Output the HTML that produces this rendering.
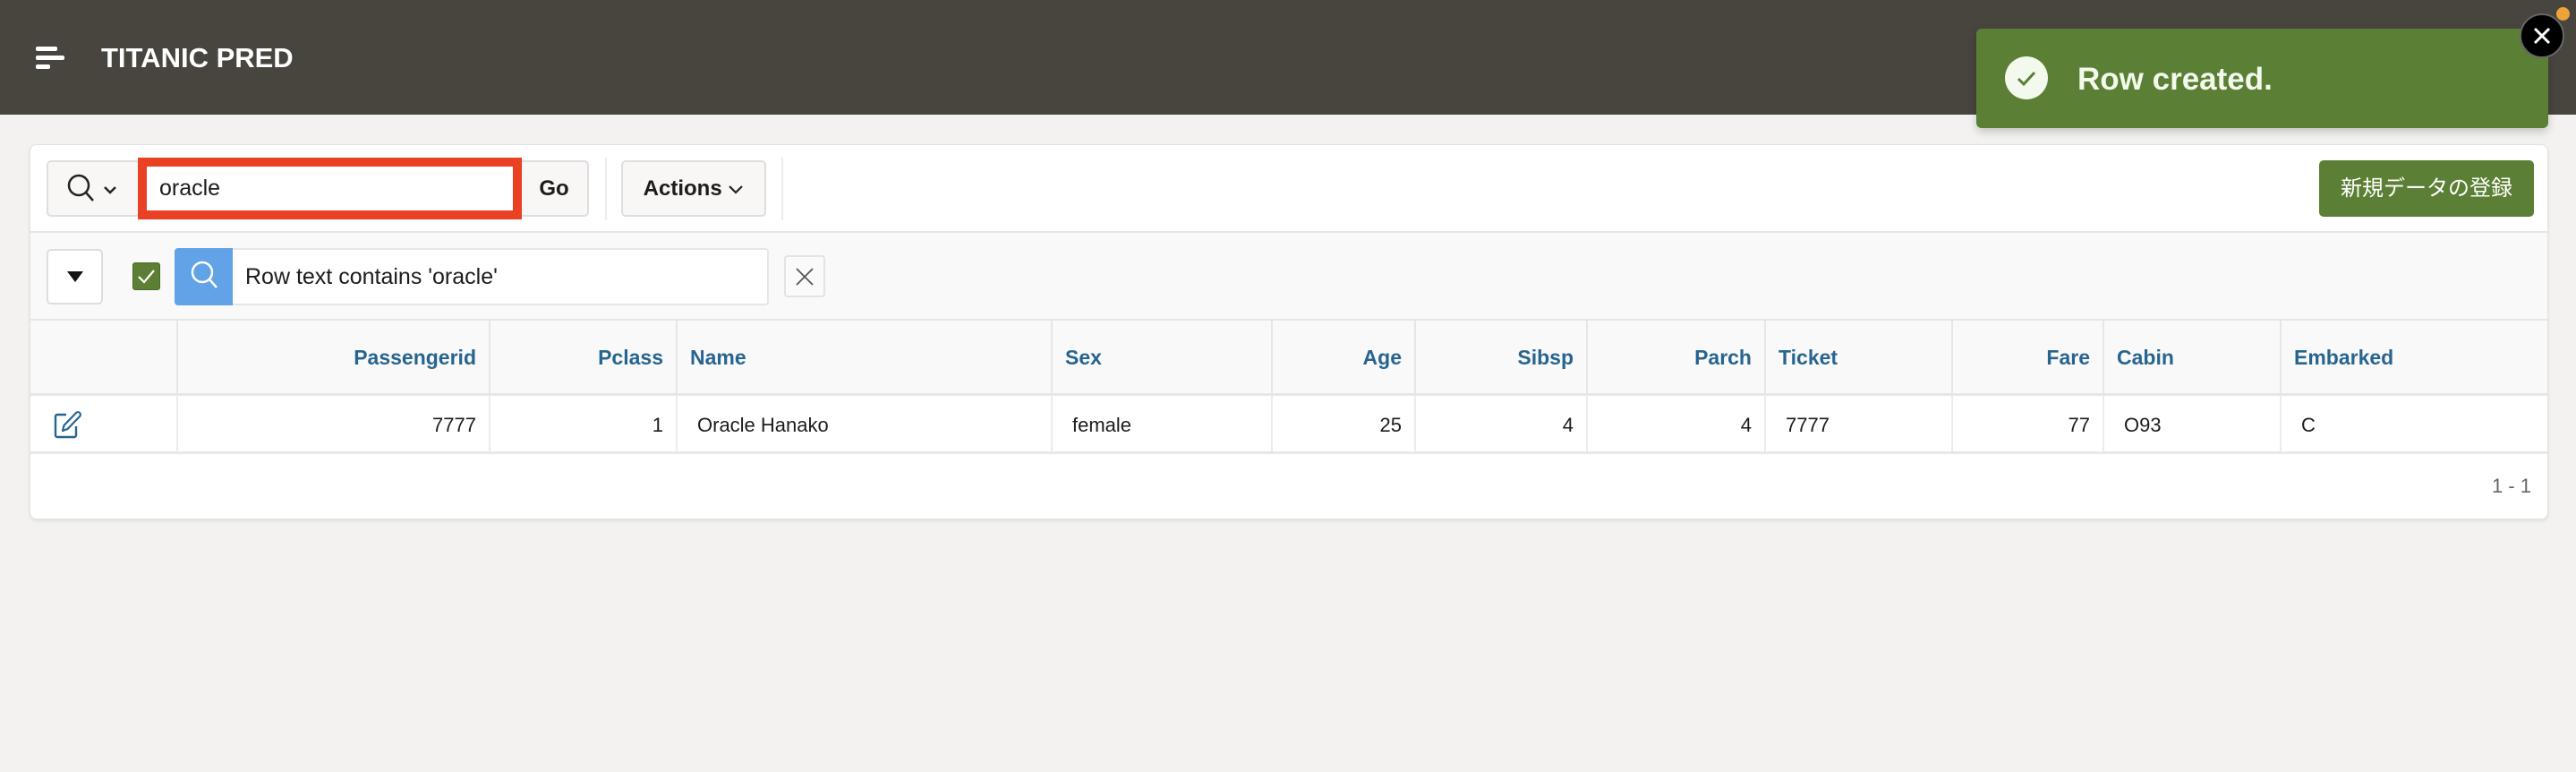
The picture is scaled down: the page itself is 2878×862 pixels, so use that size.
<!DOCTYPE html>
<html><head><meta charset="utf-8"><style>
*{box-sizing:border-box;margin:0;padding:0}
body{width:2878px;height:862px;background:#f3f2f0;font-family:"Liberation Sans","Noto Sans CJK JP",sans-serif;position:relative;overflow:hidden;color:#1c1c1c}
.a{position:absolute}
.hdr{left:0;top:0;width:2878px;height:128px;background:#48453f}
.card{left:33px;top:161px;width:2814px;height:419px;background:#fff;border:1px solid #e2e2e2;border-radius:8px;box-shadow:0 2px 4px rgba(0,0,0,.08);overflow:hidden}
.btn{background:#f8f7f5;border:2px solid #dedede;border-radius:5px}
.th{top:196px;height:82px;line-height:82px;font-weight:bold;font-size:23px;color:#276590;padding:0 14px;border-left:2px solid #e6e6e6}
.td{top:280px;height:65px;line-height:65px;font-size:22px;padding:0 14px;border-left:2px solid #ececec}
.r{text-align:right}
</style></head><body>
<div class="a hdr"></div>
<div class="a" style="left:40px;top:52px;width:24px;height:5px;background:#fff;border-radius:2px"></div>
<div class="a" style="left:40px;top:62px;width:32px;height:5px;background:#fff;border-radius:2px"></div>
<div class="a" style="left:40px;top:72px;width:16px;height:5px;background:#fff;border-radius:2px"></div>
<div class="a" style="left:113px;top:45px;font-size:31px;font-weight:bold;color:#fff;line-height:40px">TITANIC PRED</div>

<div class="a card">
 <div class="a btn" style="left:18px;top:17px;width:105px;height:63px"></div>
 <svg class="a" style="left:38px;top:30px" width="70" height="40" viewBox="0 0 70 40"><circle cx="16" cy="15" r="11" fill="none" stroke="#222" stroke-width="2.5"/><line x1="24" y1="23" x2="32" y2="32" stroke="#222" stroke-width="2.5"/><polyline points="45,17 51,23 57,17" fill="none" stroke="#222" stroke-width="2.5"/></svg>
 <div class="a btn" style="left:520px;top:17px;width:104px;height:63px;line-height:59px;text-align:center;font-weight:bold;font-size:24px;padding-left:26px">Go</div>
 <div class="a" style="left:120px;top:14px;width:429px;height:69px;border:10px solid #ea4125;background:#fff;font-size:25px;line-height:49px;padding-left:14px">oracle</div>
 <div class="a" style="left:642px;top:14px;width:2px;height:70px;background:#ececec"></div>
 <div class="a btn" style="left:660px;top:17px;width:162px;height:63px;line-height:59px;text-align:center;font-weight:bold;font-size:24px">Actions <svg width="18" height="12" viewBox="0 0 18 12"><polyline points="2,2 9,9 16,2" fill="none" stroke="#222" stroke-width="2.2"/></svg></div>
 <div class="a" style="left:839px;top:14px;width:2px;height:70px;background:#ececec"></div>
 <div class="a" style="left:2557px;top:17px;width:240px;height:63px;background:#5b7f34;border-radius:5px;color:#fff;font-size:24px;line-height:63px;text-align:center">新規データの登録</div>
 <div class="a" style="left:0;top:96px;width:2814px;height:100px;background:#f9f9f9;border-top:2px solid #e6e6e6"></div>
 <div class="a" style="left:18px;top:116px;width:63px;height:62px;background:#fff;border:2px solid #dedede;border-radius:5px"></div>
 <div class="a" style="left:41px;top:141px;width:0;height:0;border-left:9px solid transparent;border-right:9px solid transparent;border-top:12px solid #111"></div>
 <div class="a" style="left:114px;top:131px;width:31px;height:31px;background:#5b7f34;border:1px solid #4a6a28;border-radius:3px"></div>
 <svg class="a" style="left:117px;top:135px" width="25" height="22"><polyline points="4,12 10,18 21,5" fill="none" stroke="#fff" stroke-width="2.2"/></svg>
 <div class="a" style="left:161px;top:115px;width:664px;height:64px;background:#fff;border:2px solid #e6e6e6;border-radius:4px"></div>
 <div class="a" style="left:161px;top:115px;width:65px;height:64px;background:#61a3e6;border-radius:4px 0 0 4px"></div>
 <svg class="a" style="left:170px;top:120px" width="48" height="52"><circle cx="22" cy="22" r="11" fill="none" stroke="#fff" stroke-width="2.5"/><line x1="30" y1="30" x2="38" y2="39" stroke="#fff" stroke-width="2.5"/></svg>
 <div class="a" style="left:240px;top:115px;line-height:64px;font-size:25px">Row text contains 'oracle'</div>
 <div class="a" style="left:842px;top:123px;width:46px;height:47px;background:#fafafa;border:2px solid #e3e3e3;border-radius:4px"></div>
 <svg class="a" style="left:853px;top:135px" width="24" height="24"><path d="M3 3L21 21M21 3L3 21" stroke="#555" stroke-width="1.8"/></svg>
 <div class="a" style="left:0;top:194px;width:2814px;height:86px;background:#f9f9f9;border-top:2px solid #e6e6e6;border-bottom:3px solid #e6e6e6"></div>
 <div class="a th r" style="left:163px;width:349px">Passengerid</div>
 <div class="a th r" style="left:512px;width:209px">Pclass</div>
 <div class="a th" style="left:721px;width:419px">Name</div>
 <div class="a th" style="left:1140px;width:246px">Sex</div>
 <div class="a th r" style="left:1386px;width:160px">Age</div>
 <div class="a th r" style="left:1546px;width:192px">Sibsp</div>
 <div class="a th r" style="left:1738px;width:199px">Parch</div>
 <div class="a th" style="left:1937px;width:209px">Ticket</div>
 <div class="a th r" style="left:2146px;width:169px">Fare</div>
 <div class="a th" style="left:2315px;width:198px">Cabin</div>
 <div class="a th" style="left:2513px;width:301px">Embarked</div>
 <svg class="a" style="left:26px;top:295px" width="32" height="34" viewBox="0 0 32 34"><path d="M14 6H4a2 2 0 0 0-2 2v21a2 2 0 0 0 2 2h19a2 2 0 0 0 2-2V19" fill="none" stroke="#276590" stroke-width="2.4"/><path d="M10 24l1.5-6L25 4a2.5 2.5 0 0 1 4 4L15.5 22z" fill="none" stroke="#276590" stroke-width="2.2" stroke-linejoin="round"/></svg>
 <div class="a td r" style="left:163px;width:349px">7777</div>
 <div class="a td r" style="left:512px;width:209px">1</div>
 <div class="a td" style="left:721px;width:419px;padding-left:22px">Oracle Hanako</div>
 <div class="a td" style="left:1140px;width:246px;padding-left:22px">female</div>
 <div class="a td r" style="left:1386px;width:160px">25</div>
 <div class="a td r" style="left:1546px;width:192px">4</div>
 <div class="a td r" style="left:1738px;width:199px">4</div>
 <div class="a td" style="left:1937px;width:209px;padding-left:22px">7777</div>
 <div class="a td r" style="left:2146px;width:169px">77</div>
 <div class="a td" style="left:2315px;width:198px;padding-left:22px">O93</div>
 <div class="a td" style="left:2513px;width:301px;padding-left:22px">C</div>
 <div class="a" style="left:0;top:342px;width:2814px;height:3px;background:#e8e8e8"></div>
 <div class="a" style="right:18px;top:368px;font-size:22px;color:#666">1 - 1</div>
</div>

<div class="a" style="left:2208px;top:32px;width:639px;height:111px;background:#5b7f34;border-radius:6px;box-shadow:0 4px 10px rgba(0,0,0,.2)"></div>
<div class="a" style="left:2240px;top:63px;width:48px;height:48px;border-radius:50%;background:#f3f9ec"></div>
<svg class="a" style="left:2240px;top:63px" width="48" height="48"><polyline points="15,25 21,31 33,18" fill="none" stroke="#5b7f34" stroke-width="3"/></svg>
<div class="a" style="left:2321px;top:67px;font-size:35px;font-weight:bold;color:#f3f9ec;line-height:44px">Row created.</div>
<div class="a" style="left:2815px;top:15px;width:50px;height:50px;border-radius:50%;background:#000;border:2px solid #666"></div>
<svg class="a" style="left:2815px;top:15px" width="50" height="50"><path d="M17 17L33 33M33 17L17 33" stroke="#fff" stroke-width="3"/></svg>
<div class="a" style="left:2856px;top:8px;width:15px;height:15px;border-radius:50%;background:#f0a23a"></div>
</body></html>
